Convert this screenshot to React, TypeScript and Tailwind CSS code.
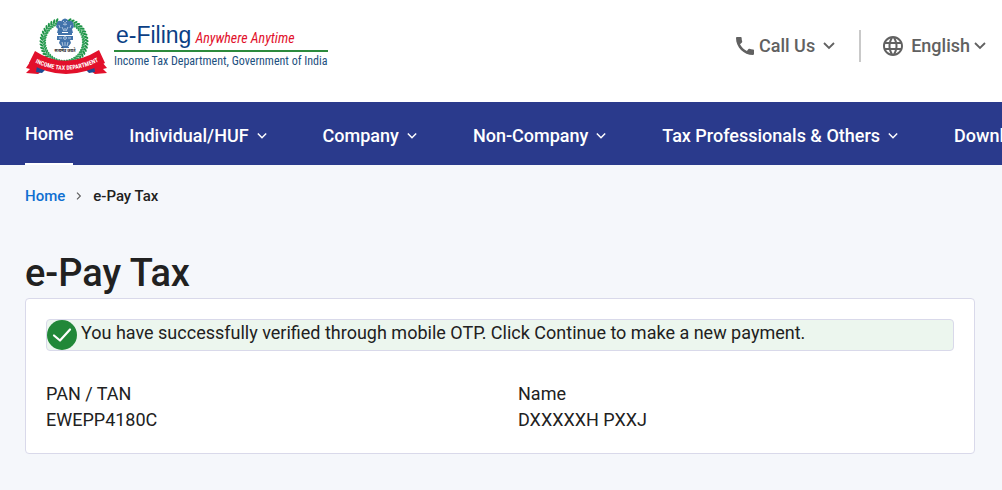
import React from "react";
import { MdCall, MdLanguage } from "react-icons/md";

const menu = ["Individual/HUF", "Company", "Non-Company", "Tax Professionals & Others", "Downloads"];

// angles of the laurel leaves, left open at the top
const leaves = Array.from({ length: 42 }, (_, i) => -76 + i * 8);

function Chevron({ className }: { className: string }) {
  return (
    <svg
      viewBox="0 0 12 12"
      className={className}
      fill="none"
      stroke="currentColor"
      strokeWidth="1.8"
      aria-hidden="true"
    >
      <path d="M1 3l5 5 5-5" />
    </svg>
  );
}

function Emblem() {
  return (
    <svg viewBox="0 0 84 60" className="w-21 h-15 shrink-0" role="img" aria-label="Income Tax Department">
      {leaves.map((a) => (
        <g key={a} transform={`translate(40 26) rotate(${a})`}>
          <ellipse cx="22.6" cy="0" rx="2.4" ry="1.1" fill="#1f9448" transform="rotate(40 22.6 0)" />
          <ellipse cx="19.6" cy="1" rx="2.2" ry="1.1" fill="#2f9f57" transform="rotate(-40 19.6 1)" />
          <circle cx="21.2" cy="1.6" r="0.5" fill="#bfe3cb" />
        </g>
      ))}
      <g fill="#4273ab">
        <path d="M38 4q3-3 6 0l2 4-1 8h-8l-1-8z" />
        <path d="M37 5q-3-1-4 2l-1 4 2 2-1 4h5V6zM45 5q3-1 4 2l1 4-2 2 1 4h-5V6z" />
        <path d="M34 17h14v2H34zM33 20h16v4H33zM36 24h10l1 3-3 4h-6l-3-4zM37 31h8v1h-8z" />
      </g>
      <g fill="none" stroke="#dfe9f5" strokeWidth="0.7">
        <path d="M39 5l1 1M43 5l-1 1M39 8q2 2 4 0M41 6v2M38 11l2 4M44 11l-2 4M35 9l1 3M47 9l-1 3M41 12v3" />
        <circle cx="41" cy="22" r="1.4" />
        <path d="M35 22h3M44 22h3M38 26l1 4M41 26v4M44 26l-1 4" />
      </g>
      <text x="41" y="36" textAnchor="middle" className="font-['Noto_Sans',sans-serif] font-bold text-[4px]" fill="#222">
        सत्यमेव जयते
      </text>
      <path d="M6 46L2 52l4 1-4 4 12 1 6-4zM78 46l5 6-4 1 4 4-12 1-7-5z" fill="#e2102b" />
      <path d="M13 50l-1 6 6 1 4-4zM70 50l1 6-6 1-4-4z" fill="#1c4b93" />
      <path d="M11 35Q41 55 75 34l6 13Q41 69 5 47z" fill="#e2102b" />
      <path id="ribbon" d="M5 43Q41 65 81 42" fill="none" />
      <text className="font-['Roboto_Condensed','Liberation_Sans',sans-serif] font-bold text-[6px]" fill="#fff">
        <textPath href="#ribbon" startOffset="50%" textAnchor="middle">
          INCOME TAX DEPARTMENT
        </textPath>
      </text>
    </svg>
  );
}

function Logo() {
  return (
    <a href="#" className="flex items-start gap-1.5">
      <Emblem />
      <div className="pt-1 whitespace-nowrap font-['Roboto_Condensed','Liberation_Sans',sans-serif]">
        <div className="flex items-baseline gap-1 px-0.5 leading-[30px]">
          <span className="font-['Liberation_Sans',sans-serif] text-[23px] text-[#0b3f85]">e-Filing</span>
          <span className="text-sm italic text-[#e2102b]">Anywhere Anytime</span>
        </div>
        <div className="border-t-2 border-[#2c8a3d] text-[#1d5080] text-xs leading-[18px]">
          Income Tax Department, Government of India
        </div>
      </div>
    </a>
  );
}

function Header() {
  return (
    <header className="bg-white flex justify-between items-start pl-6 pr-4 pt-4 h-[102px]">
      <Logo />
      <div className="flex items-center pt-3.5 text-[#616161] text-lg font-medium whitespace-nowrap">
        <button type="button" className="flex items-center">
          <MdCall className="size-6 mr-0.5" />
          Call Us
          <Chevron className="size-3 ml-2" />
        </button>
        <div className="h-8 w-0.5 bg-[#c9c9c9] ml-6 mr-5" />
        <button type="button" className="flex items-center">
          <MdLanguage className="size-6 mr-1.5" />
          English
          <Chevron className="size-3 ml-1" />
        </button>
      </div>
    </header>
  );
}

function Navbar() {
  return (
    <nav className="bg-[#2a3a8c] text-white text-lg font-medium h-[63px] pl-[25px] overflow-hidden">
      <ul className="flex h-full gap-14 whitespace-nowrap">
        <li className="flex">
          <a href="#" className="border-b-2 border-white pt-[18px]">
            Home
          </a>
        </li>
        {menu.map((item) => (
          <li key={item} className="flex">
            <button type="button" className="flex items-center pt-1">
              {item}
              <Chevron className="size-[10px] ml-2" />
            </button>
          </li>
        ))}
      </ul>
    </nav>
  );
}

function Detail({ label, value }: { label: string; value: string }) {
  return (
    <div>
      <dt>{label}</dt>
      <dd>{value}</dd>
    </div>
  );
}

function App() {
  return (
    <div className="min-h-screen bg-[#f5f7fb] text-[#212121] font-['Roboto',sans-serif]">
      <Header />
      <Navbar />
      <main className="pl-[25px] pr-[27px] pb-9">
        <div className="flex items-center pt-[19px] text-[15px] leading-6 font-medium">
          <a href="#" className="text-[#0f6fd1]">
            Home
          </a>
          <Chevron className="size-2 mx-[10px] -rotate-90 text-[#616161]" />
          <span>e-Pay Tax</span>
        </div>
        <h1 className="pt-10 text-[38px] leading-[50px] font-medium">e-Pay Tax</h1>
        <section className="bg-white border border-[#d9d9ea] rounded p-5 text-lg leading-[26px]">
          <div className="flex bg-[#ecf6ee] border border-[#d9d9ea] rounded">
            <svg viewBox="0 0 30 30" className="size-[30px] shrink-0 mr-1" aria-hidden="true">
              <circle cx="15" cy="15" r="15" fill="#218838" />
              <path
                d="M7 15.5l6 5L23 9.5"
                fill="none"
                stroke="#fff"
                strokeWidth="2.2"
                strokeLinecap="round"
                strokeLinejoin="round"
              />
            </svg>
            <p>You have successfully verified through mobile OTP. Click Continue to make a new payment.</p>
          </div>
          <dl className="grid grid-cols-2 gap-x-9 pt-[30px]">
            <Detail label="PAN / TAN" value="EWEPP4180C" />
            <Detail label="Name" value="DXXXXXH PXXJ" />
          </dl>
        </section>
      </main>
    </div>
  );
}

export default App;
